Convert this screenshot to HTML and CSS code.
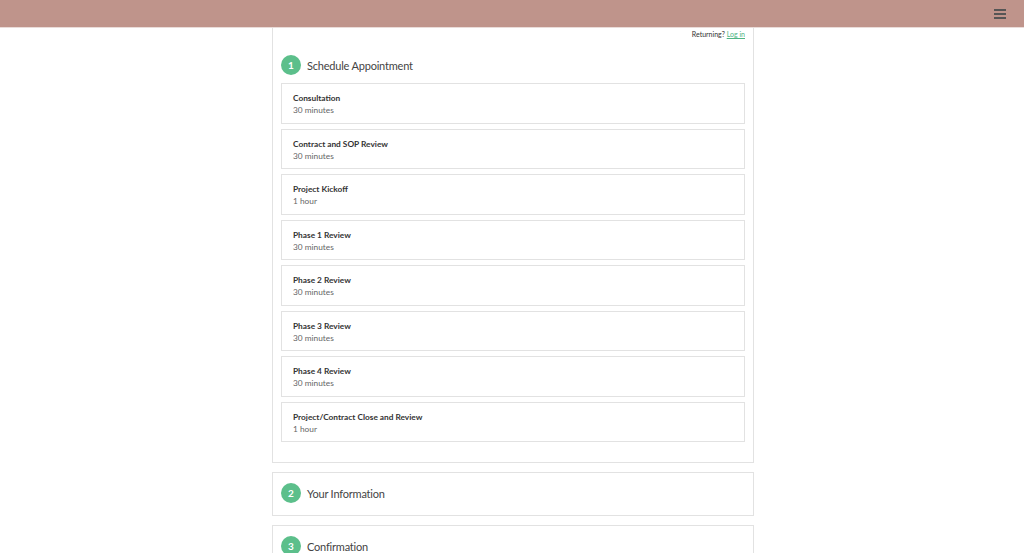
FILE: index.html
```html
<!DOCTYPE html>
<html lang="en">
<head>
    <meta charset="UTF-8" />
    <title>Schedule Appointment</title>
    <link rel="stylesheet" href="styles.css">
</head>
<body>
    <div class="top-bar">
        <button class="menu-button" aria-label="Menu">
            <svg width="12" height="10" viewBox="0 0 12 10">
                <rect x="0" y="0" width="12" height="2" fill="#555"/>
                <rect x="0" y="4" width="12" height="2" fill="#555"/>
                <rect x="0" y="8" width="12" height="2" fill="#555"/>
            </svg>
        </button>
    </div>

    <div class="steps">
        <div class="step-panel first">
            <div class="returning">Returning? <a href="#">Log in</a></div>
            <div class="step-head">
                <span class="step-num">1</span>
                <span class="step-title">Schedule Appointment</span>
            </div>
            <div class="type-list">
                <div class="type-card">
                    <div class="type-name">Consultation</div>
                    <div class="type-time">30 minutes</div>
                </div>
                <div class="type-card">
                    <div class="type-name">Contract and SOP Review</div>
                    <div class="type-time">30 minutes</div>
                </div>
                <div class="type-card">
                    <div class="type-name">Project Kickoff</div>
                    <div class="type-time">1 hour</div>
                </div>
                <div class="type-card">
                    <div class="type-name">Phase 1 Review</div>
                    <div class="type-time">30 minutes</div>
                </div>
                <div class="type-card">
                    <div class="type-name">Phase 2 Review</div>
                    <div class="type-time">30 minutes</div>
                </div>
                <div class="type-card">
                    <div class="type-name">Phase 3 Review</div>
                    <div class="type-time">30 minutes</div>
                </div>
                <div class="type-card">
                    <div class="type-name">Phase 4 Review</div>
                    <div class="type-time">30 minutes</div>
                </div>
                <div class="type-card">
                    <div class="type-name">Project/Contract Close and Review</div>
                    <div class="type-time">1 hour</div>
                </div>
            </div>
        </div>

        <div class="step-panel">
            <div class="step-head">
                <span class="step-num">2</span>
                <span class="step-title">Your Information</span>
            </div>
        </div>

        <div class="step-panel">
            <div class="step-head">
                <span class="step-num">3</span>
                <span class="step-title">Confirmation</span>
            </div>
        </div>
    </div>
</body>
</html>
```

FILE: styles.css
```css
html, body {
    margin: 0;
    padding: 0;
}
body {
    background-color: #fff;
    font-family: Lato, "Open Sans", sans-serif;
    color: #444;
    overflow: hidden;
}
.top-bar {
    height: 27px;
    background-color: #bf948b;
    border-bottom: 1px solid #eadcd9;
    display: flex;
    justify-content: flex-end;
    align-items: center;
}
.menu-button {
    background: none;
    border: none;
    padding: 0;
    margin-right: 18px;
    width: 12px;
    height: 10px;
    display: flex;
    cursor: pointer;
}
.steps {
    width: 482px;
    margin: 0 0 0 calc(50% - 240px);
    display: flex;
    flex-direction: column;
    gap: 9px;
}
.step-panel {
    border: 1px solid #e2e2e2;
    padding: 9px 8px 11px;
}
.step-panel.first {
    border-top: none;
    padding-top: 1px;
    padding-bottom: 20px;
}
.returning {
    text-align: right;
    font-size: 7px;
    color: #333;
    line-height: 10px;
}
.returning a {
    color: #4fb583;
}
.step-head {
    display: flex;
    align-items: center;
    gap: 6px;
    height: 22px;
    margin: 15px 0 7px;
}
.step-panel .step-head:first-child {
    margin: 0;
}
.step-num {
    width: 20px;
    height: 20px;
    border-radius: 50%;
    background-color: #5cbf8b;
    color: #fff;
    font-size: 10px;
    font-weight: bold;
    display: flex;
    align-items: center;
    justify-content: center;
}
.step-title {
    font-size: 11px;
    letter-spacing: -0.2px;
    color: #444;
}
.type-list {
    display: flex;
    flex-direction: column;
    gap: 5px;
}
.type-card {
    border: 1px solid #e2e2e2;
    box-sizing: border-box;
    height: 40.5px;
    padding: 2px 11px 0;
    display: flex;
    flex-direction: column;
    justify-content: center;
    gap: 2px;
    cursor: pointer;
}
.type-name {
    font-size: 8.3px;
    font-weight: bold;
    color: #333;
}
.type-time {
    font-size: 8.3px;
    color: #666;
}
```
